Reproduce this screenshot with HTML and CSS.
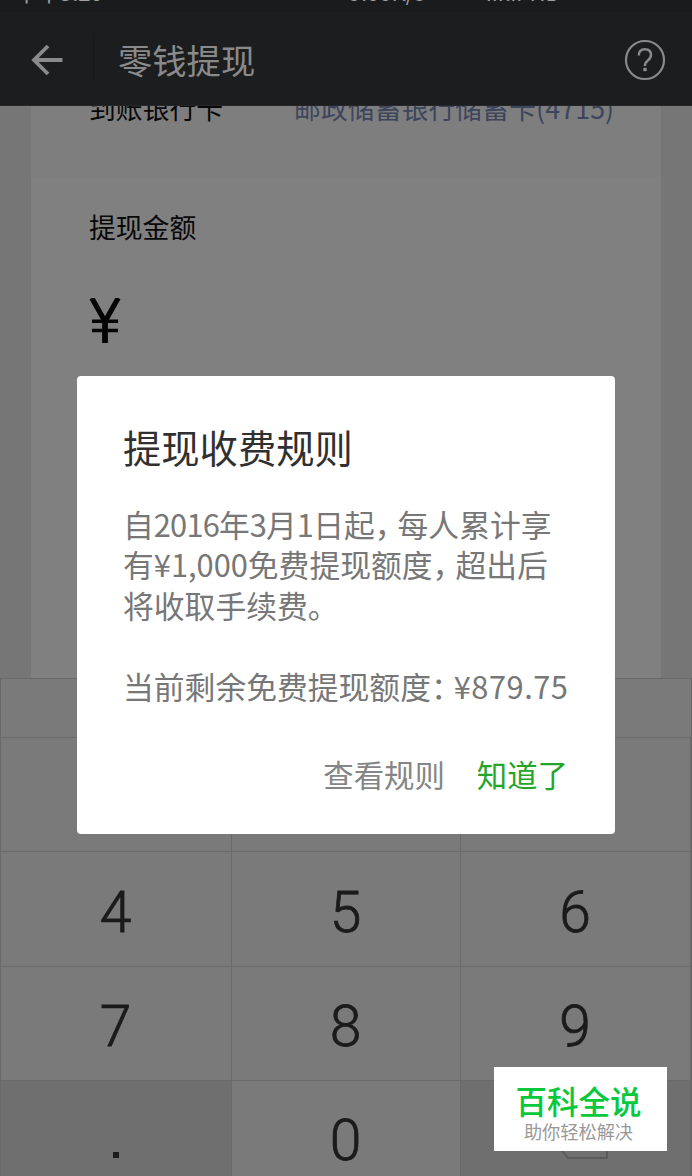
FILE: index.html
```html
<!DOCTYPE html>
<html lang="zh-CN">
<head>
<meta charset="utf-8">
<title>零钱提现</title>
<link rel="stylesheet" href="styles.css">
</head>
<body>
<div class="screen">
  <div class="status"><span class="status-time">下午5:20</span><span class="status-speed">9.00K/s</span><span class="status-sep">✦</span><span class="status-net">ııılıı</span><span class="status-hd">HD</span></div>
  <header class="header">
    <svg class="back" viewBox="0 0 34 32" width="34" height="32"><path d="M18 2 4 16l14 14M4 16h28.5" fill="none" stroke="#8a8a8b" stroke-width="3.8"/></svg>
    <i class="divider"></i>
    <h1 class="title">零钱提现</h1>
    <svg class="help" viewBox="0 0 42 42" width="42" height="42"><g fill="none" stroke="#898989"><circle cx="21" cy="21" r="19" stroke-width="2.2"/><path d="M14.8 16.6c0-4 2.3-6.3 6.1-6.3s6.1 2.3 6.1 5.8c0 2.6-1.4 4-3.2 5.4-1.9 1.5-2.9 2.3-2.9 4.7v.8" stroke-width="2.5"/></g><rect x="19.2" y="28.7" width="3.6" height="3.6" rx="1" fill="#898989"/></svg>
  </header>
  <main class="content">
    <section class="card">
      <div class="bank"><span>到账银行卡</span><span class="bank-name">邮政储蓄银行储蓄卡(4715)</span></div>
      <div class="amount"><div class="label">提现金额</div>
        <svg class="yen" viewBox="0 0 32 45" width="32" height="45"><path d="M2.8 0 16 23.5 29.2 0" fill="none" stroke="#050505" stroke-width="5.2"/><path d="M3 23.3h26M3 32.5h26" stroke="#050505" stroke-width="3.6"/><path d="M16 21v24" stroke="#050505" stroke-width="5.8"/></svg>
      </div>
    </section>
  </main>
  <div class="bar"></div>
  <div class="keys">
    <div class="key"></div><div class="key"></div><div class="key"></div>
    <div class="key">4</div><div class="key">5</div><div class="key">6</div>
    <div class="key">7</div><div class="key">8</div><div class="key">9</div>
    <div class="key dark"><i class="dot"></i></div><div class="key">0</div>
    <div class="key dark"><svg class="erase" viewBox="0 0 58 38" width="58" height="38"><path d="M17 1h39v36H17L2 19z" fill="none" stroke="#555" stroke-width="1.6"/></svg></div>
  </div>
  <div class="dialog">
    <h2 class="dialog-title">提现收费规则</h2>
    <div class="rules">
      <div>自<b class="date">2016</b>年<b class="date">3</b>月<b class="date">1</b>日起<i class="comma">，</i>每人累计享</div>
      <div>有<b>¥1,000</b>免费提现额度<i class="comma">，</i>超出后</div>
      <div>将收取手续费。</div>
      <div class="quota">当前剩余免费提现额度<i class="colon">：</i><b class="sum">¥879.75</b></div>
    </div>
    <div class="actions"><span>查看规则</span><span class="ok">知道了</span></div>
  </div>
  <div class="stamp"><div class="stamp-name">百科全说</div><div class="stamp-sub">助你轻松解决</div></div>
</div>
</body>
</html>
```
FILE: styles.css
```css
* { box-sizing: border-box; }
body { margin: 0; font-family: "Noto Sans CJK SC", sans-serif; }
i { font-style: normal; }
b { font-weight: 400; }
.screen { position: relative; width: 692px; height: 1176px; overflow: hidden; display: flex; flex-direction: column; background: #767676; }
.status { height: 12px; flex: none; background: #191b1c; color: #a0a0a0; display: flex; align-items: flex-end; overflow: hidden; font-size: 22px; line-height: 22px; padding: 0 0 10px 16px; white-space: nowrap; }
.status-speed { margin-left: 246px; }
.status-sep { margin-left: 18px; font-size: 16px; }
.status-net { margin-left: 30px; }
.status-hd { margin-left: 7px; }
.header { height: 94px; flex: none; background: #1c1d1f; display: flex; align-items: center; padding: 0 26px 0 30px; border-bottom: 1px solid #252628; }
.back { margin-top: 2px; }
.divider { width: 1px; height: 48px; margin-left: 29px; background: #17181a; }
.title { margin: 0 0 0 24px; font-size: 34.3px; line-height: 50px; font-weight: 400; color: #8a8a8b; flex: 1; }
.help { margin-top: 2px; }
.content { height: 572px; flex: none; padding: 0 31px; }
.card { height: 572px; background: #808080; font-size: 26.8px; color: #080808; }
.bank { height: 71px; background: #7e7e7e; display: flex; align-items: flex-start; line-height: 40px; padding: 0 0 0 58px; overflow: hidden; }
.bank span { margin-top: -18px; white-space: nowrap; }
.bank .bank-name { margin-left: 71px; color: #3d455c; letter-spacing: 0.1px; }
.amount { padding: 30px 58px; }
.label { line-height: 40px; }
.yen { display: block; margin-top: 51px; }
.bar { height: 59px; flex: none; background: #7a7a7a; border: 1px solid #686868; border-bottom: 0; }
.keys { flex: none; display: grid; grid-template-columns: 231px 229px 230px; grid-auto-rows: 114.4px; border-left: 1px solid #696969; border-right: 1px solid #696969; }
.key { display: flex; align-items: center; justify-content: center; background: #7a7a7a; border-top: 1px solid #6a6a6a; border-right: 1px solid #6a6a6a; color: #1b1b1b; font: 300 57px/60px Roboto, sans-serif; -webkit-text-stroke: 0.8px #1b1b1b; padding: 7px 1px 0 0; }
.key.dark { background: #6f6f6f; }
.dot { width: 6px; height: 6px; background: #1b1b1b; margin-top: 28px; }
.erase { margin: 0 0 3px 10px; }
.dialog { position: absolute; left: 77px; top: 376px; width: 538px; height: 458px; border-radius: 4px; background: #fff; padding: 43px 47px 0 46px; }
.dialog-title { margin: 0; font-size: 38.3px; line-height: 56px; font-weight: 400; color: #303030; }
.rules { margin-top: 29px; font-size: 30.8px; line-height: 40.4px; color: #777; white-space: nowrap; }
.date { letter-spacing: -0.8px; }
.sum { letter-spacing: 0.5px; }
.comma { letter-spacing: -8px; }
.quota { margin-top: 40.4px; }
.colon { letter-spacing: -8px; }
.actions { display: flex; justify-content: flex-end; gap: 32px; margin-top: 45px; font-size: 30.4px; line-height: 46px; color: #858585; }
.actions .ok { color: #25a528; }
.stamp { position: absolute; left: 494px; top: 1067px; width: 173px; height: 84px; background: #fff; text-align: center; padding: 12px 4px 0 0; white-space: nowrap; }
.stamp-name { color: #09c83c; font-size: 31.5px; line-height: 43px; font-weight: 500; }
.stamp-sub { color: #999; font-size: 18.2px; line-height: 18px; }
```
